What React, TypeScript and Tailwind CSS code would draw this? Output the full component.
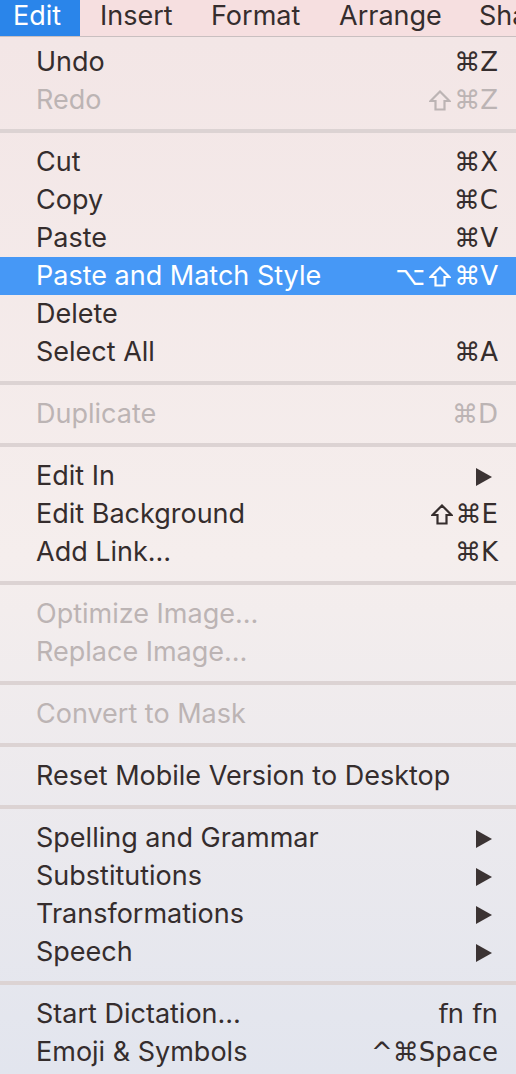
import React from "react";

type Item =
  | { kind: "sep" }
  | {
      kind: "item";
      label: string;
      shortcut?: string;
      submenu?: boolean;
      disabled?: boolean;
      active?: boolean;
    };

const items: Item[] = [
  { kind: "item", label: "Undo", shortcut: "⌘Z" },
  { kind: "item", label: "Redo", shortcut: "⇧⌘Z", disabled: true },
  { kind: "sep" },
  { kind: "item", label: "Cut", shortcut: "⌘X" },
  { kind: "item", label: "Copy", shortcut: "⌘C" },
  { kind: "item", label: "Paste", shortcut: "⌘V" },
  { kind: "item", label: "Paste and Match Style", shortcut: "⌥⇧⌘V", active: true },
  { kind: "item", label: "Delete" },
  { kind: "item", label: "Select All", shortcut: "⌘A" },
  { kind: "sep" },
  { kind: "item", label: "Duplicate", shortcut: "⌘D", disabled: true },
  { kind: "sep" },
  { kind: "item", label: "Edit In", submenu: true },
  { kind: "item", label: "Edit Background", shortcut: "⇧⌘E" },
  { kind: "item", label: "Add Link…", shortcut: "⌘K" },
  { kind: "sep" },
  { kind: "item", label: "Optimize Image…", disabled: true },
  { kind: "item", label: "Replace Image…", disabled: true },
  { kind: "sep" },
  { kind: "item", label: "Convert to Mask", disabled: true },
  { kind: "sep" },
  { kind: "item", label: "Reset Mobile Version to Desktop" },
  { kind: "sep" },
  { kind: "item", label: "Spelling and Grammar", submenu: true },
  { kind: "item", label: "Substitutions", submenu: true },
  { kind: "item", label: "Transformations", submenu: true },
  { kind: "item", label: "Speech", submenu: true },
  { kind: "sep" },
  { kind: "item", label: "Start Dictation…", shortcut: "fn fn" },
  { kind: "item", label: "Emoji & Symbols", shortcut: "^⌘Space" },
];

function Arrow() {
  return (
    <svg width="18" height="20" viewBox="0 0 18 20" className="mr-[5px]">
      <polygon points="1,1 17,10 1,19" fill="#3b3333" />
    </svg>
  );
}

// outlined shift arrow, drawn thicker than the font glyph
function Shift() {
  return (
    <svg width="22" height="21" viewBox="0 0 22 21" className="ml-[4px] mr-[3px]">
      <polygon
        points="11,1.5 20.5,11 15.5,11 15.5,19.5 6.5,19.5 6.5,11 1.5,11"
        fill="none"
        stroke="currentColor"
        strokeWidth="2.2"
        strokeLinejoin="miter"
      />
    </svg>
  );
}

function Shortcut({ keys }: { keys: string }) {
  return (
    <span
      className="flex items-center text-[26px]"
      style={{ fontFamily: "'DejaVu Sans', Inter, sans-serif" }}
    >
      {keys.split("⇧").map((part, i) => (
        <React.Fragment key={i}>
          {i > 0 && <Shift />}
          {part && <span>{part}</span>}
        </React.Fragment>
      ))}
    </span>
  );
}

export default function App() {
  return (
    <div
      className="w-[516px] h-[1074px] overflow-hidden text-[27px] text-[#352d2d]"
      style={{ fontFamily: "Inter, 'Liberation Sans', 'DejaVu Sans', sans-serif" }}
    >
      {/* Menu bar */}
      <div className="flex items-center h-[37px] bg-[#f6dfe0] border-b border-[#c9bfc0] whitespace-nowrap overflow-hidden">
        <div className="flex items-center shrink-0 h-full w-[80px] pl-[13px] pb-[3px] bg-[#2a85ea] text-white">
          Edit
        </div>
        <div className="shrink-0 ml-[20px] w-[111px] pb-[3px]">Insert</div>
        <div className="shrink-0 w-[128px] pb-[3px]">Format</div>
        <div className="shrink-0 w-[140px] pb-[3px]">Arrange</div>
        <div className="shrink-0 pb-[3px]">Share</div>
      </div>

      {/* Menu */}
      <div className="h-[1037px] pt-[6px] bg-gradient-to-b from-[#f3e6e6] via-[#f5eeed] to-[#e2e5ee]">
        {items.map((it, i) =>
          it.kind === "sep" ? (
            <div key={i} className="h-[24px] flex items-center">
              <div className="w-full h-[4px] bg-[#dcd3d3]" />
            </div>
          ) : (
            <div
              key={i}
              className={[
                "flex items-center justify-between h-[38px] pt-[1px] pl-[36px] pr-[18px] whitespace-nowrap",
                it.active ? "bg-[#4698f6] text-white" : "",
                it.disabled ? "text-[#bcb4b4]" : "",
              ].join(" ")}
            >
              <span>{it.label}</span>
              {it.submenu ? (
                <Arrow />
              ) : it.shortcut ? (
                <Shortcut keys={it.shortcut} />
              ) : null}
            </div>
          )
        )}
      </div>
    </div>
  );
}
